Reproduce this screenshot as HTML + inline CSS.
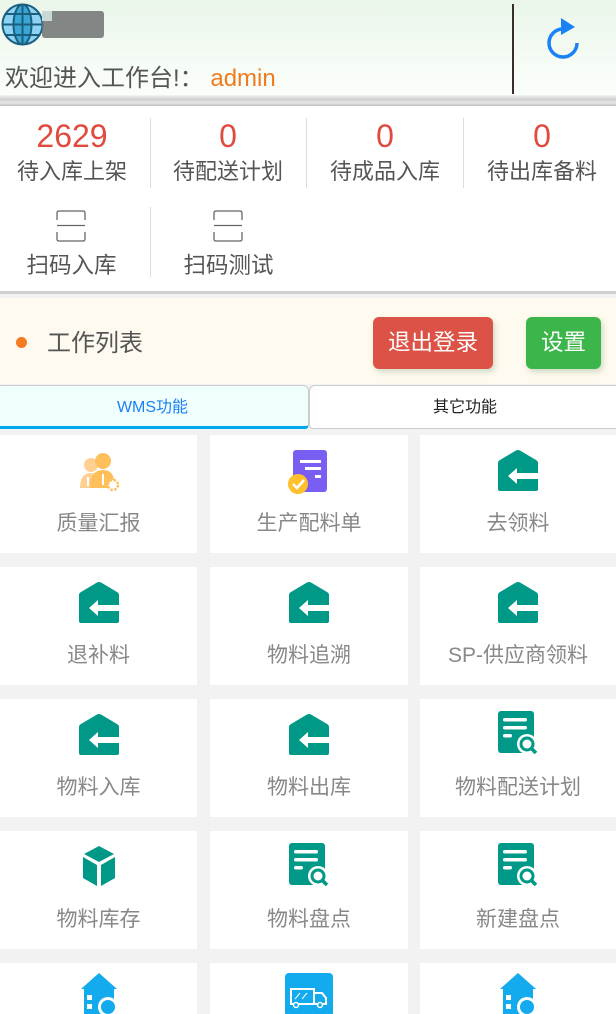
<!DOCTYPE html>
<html style="width:616px;height:1014px;overflow:hidden"><head><meta charset="utf-8"><style>
*{margin:0;padding:0;box-sizing:border-box}
body{width:616px;height:1014px;overflow:hidden;background:#f2f2f2;font-family:"Liberation Sans","Noto Sans CJK SC",sans-serif;position:relative}
.hdr{position:absolute;left:0;top:0;width:616px;height:96px;background:linear-gradient(#eaf6ea,#fbfefb)}
.band{position:absolute;left:0;top:95px;width:616px;height:11px;background:linear-gradient(#f4f4f4,#cfcfcf 40%,#e6e6e6 70%,#bdbdbd)}
.stats{position:absolute;left:0;top:106px;width:616px;height:188px;background:#fff;border-bottom:3px solid #d0d0d0}
.st{position:absolute;width:150px;text-align:center}
.st .n{color:#e04a3f;font-size:32px;line-height:36px}
.st .l{color:#555;font-size:22px;line-height:28px;margin-top:4px}
.vl{position:absolute;width:1px;background:#ddd}
.wl{position:absolute;left:0;top:298px;width:616px;height:86px;background:#fffaef}
.btn{position:absolute;color:#fff;font-size:22.5px;border-radius:6px;text-align:center;line-height:52px;box-shadow:2px 3px 6px rgba(120,160,120,.35)}
.tab{position:absolute;top:385px;height:44px;font-size:16px;text-align:center;line-height:44px;border:1px solid #ccc;border-radius:6px 6px 4px 4px}
.c{position:absolute;height:118px;background:#fff}
.c svg{position:absolute;left:50%;margin-left:-21px;top:15px}
.c .t{position:absolute;left:0;right:0;top:75px;text-align:center;font-size:21px;color:#888;line-height:28px}
</style></head><body>
<div class="hdr">
 <svg style="position:absolute;left:1px;top:3px" width="43" height="43" viewBox="0 0 43 43"><circle cx="21.5" cy="21.5" r="20" fill="#8fd3f4" stroke="#1b5f7f" stroke-width="2"/><ellipse cx="21.5" cy="21.5" rx="9" ry="20" fill="#3aa6d6" stroke="#1b5f7f" stroke-width="2"/><line x1="21.5" y1="1.5" x2="21.5" y2="41.5" stroke="#1b5f7f" stroke-width="2"/><line x1="1.5" y1="21.5" x2="41.5" y2="21.5" stroke="#1b5f7f" stroke-width="2"/><path d="M5 11H38M5 32H38" stroke="#1b5f7f" stroke-width="2"/></svg>
 <div style="position:absolute;left:42px;top:11px;width:62px;height:27px;background:#6f7272;opacity:.85;border-radius:3px"></div>
 <div style="position:absolute;left:42px;top:11px;width:10px;height:10px;background:#c8d8d8"></div>
 <div style="position:absolute;left:5px;top:64px;font-size:24px;color:#555;line-height:30px">欢迎进入工作台!：<span style="color:#f07b1c"> admin</span></div>
 <div style="position:absolute;left:512px;top:4px;width:1.5px;height:90px;background:#3a2e28"></div>
 <svg style="position:absolute;left:540px;top:18px" width="44" height="44" viewBox="0 0 44 44"><path d="M23 11A14 14 0 1 0 37 25" fill="none" stroke="#1a82f5" stroke-width="3.5"/><path d="M21 0L35 9L21 17Z" fill="#1a82f5"/></svg>
</div>
<div class="band"></div>
<div class="stats">
 <div class="st" style="left:-3px;top:12px"><div class="n">2629</div><div class="l">待入库上架</div></div>
 <div class="st" style="left:153px;top:12px"><div class="n">0</div><div class="l">待配送计划</div></div>
 <div class="st" style="left:310px;top:12px"><div class="n">0</div><div class="l">待成品入库</div></div>
 <div class="st" style="left:467px;top:12px"><div class="n">0</div><div class="l">待出库备料</div></div>
 <div class="vl" style="left:150px;top:12px;height:70px"></div>
 <div class="vl" style="left:306px;top:12px;height:70px"></div>
 <div class="vl" style="left:463px;top:12px;height:70px"></div>
 <div class="vl" style="left:150px;top:101px;height:70px"></div>
 <svg style="position:absolute;left:56px;top:104px" width="30" height="32" viewBox="0 0 30 32"><path d="M1 10V3Q1 1 3 1H27Q29 1 29 3V10M1 22V29Q1 31 3 31H27Q29 31 29 29V22M1 15.5H29" fill="none" stroke="#666" stroke-width="1.3"/></svg>
 <svg style="position:absolute;left:213px;top:104px" width="30" height="32" viewBox="0 0 30 32"><path d="M1 10V3Q1 1 3 1H27Q29 1 29 3V10M1 22V29Q1 31 3 31H27Q29 31 29 29V22M1 15.5H29" fill="none" stroke="#666" stroke-width="1.3"/></svg>
 <div style="position:absolute;left:0;width:143px;top:142px;text-align:center;font-size:22.5px;color:#555">扫码入库</div>
 <div style="position:absolute;left:157px;width:143px;top:142px;text-align:center;font-size:22.5px;color:#555">扫码测试</div>
</div>
<div class="wl">
 <div style="position:absolute;left:16px;top:39px;width:11px;height:11px;border-radius:50%;background:#f47b20"></div>
 <div style="position:absolute;left:47px;top:31px;font-size:24px;color:#555;line-height:30px">工作列表</div>
 <div class="btn" style="left:373px;top:19px;width:120px;background:#dd5246">退出登录</div>
 <div class="btn" style="left:526px;top:19px;width:75px;background:#3cb64a">设置</div>
</div>
<div class="tab" style="left:-4px;width:313px;background:#f1fefe;color:#1a82f5;border-bottom:3px solid #00a8f0">WMS功能</div>
<div class="tab" style="left:309px;width:312px;background:#fff;color:#222">其它功能</div>

<svg width="0" height="0" style="position:absolute">
<defs>
<g id="home"><path d="M1 13Q1 11 3 10L19 0.5Q21 -0.5 23 0.5L39 10Q41 11 41 13V39Q41 41 39 41H3Q1 41 1 39Z" fill="#009886"/><path d="M11 26L20 18V23H42V29H20V34Z" fill="#fff"/></g>
<g id="doc"><rect x="1" y="0" width="36" height="42" rx="3" fill="#009886"/><rect x="6" y="7" width="24" height="3.5" rx="1.7" fill="#fff"/><rect x="6" y="15" width="24" height="3.5" rx="1.7" fill="#fff"/><rect x="6" y="23" width="9" height="3.5" rx="1.7" fill="#fff"/><circle cx="30" cy="33" r="10" fill="#fff"/><circle cx="30" cy="33" r="6" fill="none" stroke="#009886" stroke-width="3"/><path d="M34 37L39 42" stroke="#009886" stroke-width="3.5"/></g>
<g id="cube"><path d="M21 0L36 8L21 16L6 8Z" fill="#009886"/><path d="M5 11L19 19V40L5 32Z" fill="#009886"/><path d="M37 11L23 19V40L37 32Z" fill="#009886"/></g>
<g id="bhome"><path d="M3 16L21 0L39 16H36V45H6V16Z" fill="#14aaee"/><rect x="9" y="22" width="5" height="5" fill="#fff"/><rect x="9" y="31" width="5" height="5" fill="#fff"/><circle cx="30" cy="34" r="10" fill="#fff"/><circle cx="30" cy="34" r="7" fill="#14aaee"/></g>
</defs></svg>

<div class="c" style="left:0;top:435px;width:197px"><svg width="42" height="42" viewBox="0 0 42 42"><circle cx="13" cy="15" r="7" fill="#ffd092"/><path d="M2 38Q2 23 13 23Q22 23 22 32V38Z" fill="#ffd092"/><circle cx="25" cy="11" r="8" fill="#ffbf5a"/><path d="M12 38Q12 20 25 20Q36 20 36 32V38Z" fill="#ffbf5a"/><rect x="9" y="27" width="2" height="9" fill="#fff"/><rect x="24" y="24" width="2" height="11" fill="#fff"/><circle cx="35" cy="35" r="5" fill="#fff" stroke="#ffbf5a" stroke-width="2.5" stroke-dasharray="2.5 1.5"/></svg><div class="t">质量汇报</div></div>
<div class="c" style="left:210px;top:435px;width:198px"><svg width="42" height="44" viewBox="0 0 42 44"><rect x="5" y="0" width="34" height="42" rx="3" fill="#7a5ef2"/><rect x="12" y="10" width="21" height="3" fill="#fff"/><rect x="17" y="17" width="16" height="3" fill="#fff"/><rect x="27" y="25" width="6" height="3" fill="#fff"/><circle cx="10" cy="34" r="10" fill="#fec12c"/><path d="M5 34L9 38L16 30" fill="none" stroke="#fff" stroke-width="2.5"/></svg><div class="t">生产配料单</div></div>
<div class="c" style="left:420px;top:435px;width:196px"><svg width="42" height="42" viewBox="0 0 42 42"><use href="#home"/></svg><div class="t">去领料</div></div>

<div class="c" style="left:0;top:567px;width:197px"><svg width="42" height="42" viewBox="0 0 42 42"><use href="#home"/></svg><div class="t">退补料</div></div>
<div class="c" style="left:210px;top:567px;width:198px"><svg width="42" height="42" viewBox="0 0 42 42"><use href="#home"/></svg><div class="t">物料追溯</div></div>
<div class="c" style="left:420px;top:567px;width:196px"><svg width="42" height="42" viewBox="0 0 42 42"><use href="#home"/></svg><div class="t">SP-供应商领料</div></div>

<div class="c" style="left:0;top:699px;width:197px"><svg width="42" height="42" viewBox="0 0 42 42"><use href="#home"/></svg><div class="t">物料入库</div></div>
<div class="c" style="left:210px;top:699px;width:198px"><svg width="42" height="42" viewBox="0 0 42 42"><use href="#home"/></svg><div class="t">物料出库</div></div>
<div class="c" style="left:420px;top:699px;width:196px"><svg width="42" height="44" viewBox="0 0 42 44" style="top:12px"><use href="#doc"/></svg><div class="t">物料配送计划</div></div>

<div class="c" style="left:0;top:831px;width:197px"><svg width="42" height="42" viewBox="0 0 42 42"><use href="#cube"/></svg><div class="t">物料库存</div></div>
<div class="c" style="left:210px;top:831px;width:198px"><svg width="42" height="44" viewBox="0 0 42 44" style="top:12px"><use href="#doc"/></svg><div class="t">物料盘点</div></div>
<div class="c" style="left:420px;top:831px;width:196px"><svg width="42" height="44" viewBox="0 0 42 44" style="top:12px"><use href="#doc"/></svg><div class="t">新建盘点</div></div>

<div class="c" style="left:0;top:963px;width:197px;height:51px"><svg width="42" height="46" viewBox="0 0 42 46" style="top:10px"><use href="#bhome"/></svg></div>
<div class="c" style="left:210px;top:963px;width:198px;height:51px"><svg width="50" height="44" viewBox="0 0 50 44" style="top:10px;margin-left:-25px"><rect x="1" y="0" width="48" height="44" rx="4" fill="#14aaee"/><path d="M7 16H30V31H7ZM30 20H38L42 25V31H30" fill="none" stroke="#fff" stroke-width="2"/><circle cx="12" cy="32" r="2.5" fill="#14aaee" stroke="#fff" stroke-width="1.5"/><circle cx="36" cy="32" r="2.5" fill="#14aaee" stroke="#fff" stroke-width="1.5"/><path d="M11 26L16 20M18 26L23 20" stroke="#fff" stroke-width="1"/></svg></div>
<div class="c" style="left:420px;top:963px;width:196px;height:51px"><svg width="42" height="46" viewBox="0 0 42 46" style="top:10px"><use href="#bhome"/></svg></div>
</body></html>
